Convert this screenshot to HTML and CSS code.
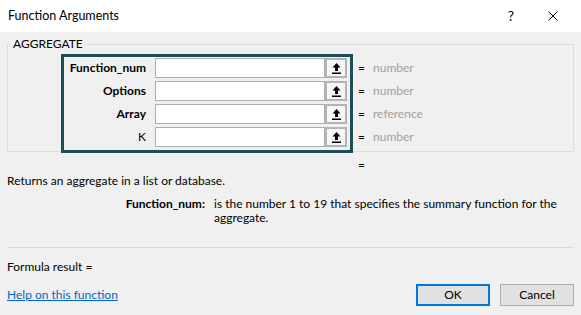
FILE: index.html
```html
<!DOCTYPE html>
<html>
<head>
<meta charset="utf-8">
<link rel="stylesheet" href="styles.css">
</head>
<body>
<div class="dialog">
  <div class="titlebar">
    <span class="title">Function Arguments</span>
    <span class="tb-btn help">?</span>
    <span class="tb-btn close">
      <svg width="10" height="10" viewBox="0 0 10 10"><path d="M0.5 0.5 L9.5 9.5 M9.5 0.5 L0.5 9.5" stroke="#000" stroke-width="1" fill="none"/></svg>
    </span>
  </div>
  <div class="content">
    <fieldset class="group">
      <legend class="group-title">AGGREGATE</legend>
      <div class="args">
        <div class="arg-box">
          <div class="arg-row">
            <span class="arg-label req">Function_num</span>
            <span class="arg-input"></span>
            <span class="ref-btn"><svg width="9" height="11" viewBox="0 0 9 11"><path d="M4.5 0 L0.5 4.5 H3 V8 H6 V4.5 H8.5 Z" fill="#000"/><rect x="0" y="9.5" width="9" height="1.5" fill="#000"/></svg></span>
          </div>
          <div class="arg-row">
            <span class="arg-label req">Options</span>
            <span class="arg-input"></span>
            <span class="ref-btn"><svg width="9" height="11" viewBox="0 0 9 11"><path d="M4.5 0 L0.5 4.5 H3 V8 H6 V4.5 H8.5 Z" fill="#000"/><rect x="0" y="9.5" width="9" height="1.5" fill="#000"/></svg></span>
          </div>
          <div class="arg-row">
            <span class="arg-label req">Array</span>
            <span class="arg-input"></span>
            <span class="ref-btn"><svg width="9" height="11" viewBox="0 0 9 11"><path d="M4.5 0 L0.5 4.5 H3 V8 H6 V4.5 H8.5 Z" fill="#000"/><rect x="0" y="9.5" width="9" height="1.5" fill="#000"/></svg></span>
          </div>
          <div class="arg-row">
            <span class="arg-label">K</span>
            <span class="arg-input"></span>
            <span class="ref-btn"><svg width="9" height="11" viewBox="0 0 9 11"><path d="M4.5 0 L0.5 4.5 H3 V8 H6 V4.5 H8.5 Z" fill="#000"/><rect x="0" y="9.5" width="9" height="1.5" fill="#000"/></svg></span>
          </div>
        </div>
        <div class="arg-values">
          <div class="val-row"><span class="eq">=</span><span class="val">number</span></div>
          <div class="val-row"><span class="eq">=</span><span class="val">number</span></div>
          <div class="val-row"><span class="eq">=</span><span class="val">reference</span></div>
          <div class="val-row"><span class="eq">=</span><span class="val">number</span></div>
        </div>
      </div>
    </fieldset>
    <div class="result-eq">=</div>
    <div class="summary">Returns an aggregate in a list or database.</div>
    <div class="arg-help">
      <span class="arg-help-name">Function_num:</span>
      <span class="arg-help-text">is the number 1 to 19 that specifies the summary function for the<br>aggregate.</span>
    </div>
    <div class="separator"></div>
    <div class="formula">Formula result =</div>
    <div class="footer">
      <a class="help-link" href="#">Help on this function</a>
      <span class="btn btn-default">OK</span>
      <span class="btn">Cancel</span>
    </div>
  </div>
</div>
</body>
</html>
```

FILE: styles.css
```css
* { box-sizing: border-box; }
html, body { margin: 0; padding: 0; }
body {
  width: 581px;
  height: 315px;
  overflow: hidden;
  background: #f0f0f0;
  font-family: "Lato", "Noto Sans", sans-serif;
  font-size: 12px;
  line-height: 16px;
  color: #000;
}
.dialog { width: 581px; height: 315px; }

.titlebar {
  height: 32px;
  background: #fff;
  display: flex;
  align-items: center;
  padding: 0 7px 0 8px;
}
.title { flex: 1; font-size: 12.5px; }
.tb-btn {
  width: 42px;
  height: 32px;
  display: flex;
  align-items: center;
  justify-content: center;
}
.help { font-size: 14px; }

.content { padding: 0 7px; }

.group {
  margin: 4px 0 0 0;
  padding: 0 0 0 3px;
  border: 1px solid #dcdcdc;
  min-width: 0;
}
.group-title {
  padding: 0 2px;
  line-height: 16px;
}

.args {
  display: flex;
  align-items: flex-start;
  margin: 2px 0 -2px 50px;
}
.arg-box {
  border: 3px solid #1d4e55;
  padding: 1px 3px 3px 0;
  display: flex;
  flex-direction: column;
  gap: 3px;
}
.arg-row {
  display: flex;
  height: 20px;
  align-items: center;
}
.arg-label {
  width: 82px;
  margin-right: 9px;
  text-align: right;
}
.arg-label.req { font-weight: bold; }
.arg-input {
  width: 170px;
  height: 20px;
  background: #fff;
  border: 1px solid #adadad;
}
.ref-btn {
  width: 22px;
  height: 20px;
  border: 2px solid #b4b4b4;
  background: #f6f6f6;
  display: flex;
  align-items: center;
  justify-content: center;
}
.ref-btn svg { display: block; }

.arg-values {
  margin: 4px 0 0 5px;
  display: flex;
  flex-direction: column;
  gap: 3px;
}
.val-row {
  height: 20px;
  display: flex;
  align-items: center;
}
.eq { width: 15px; }
.val { color: #a0a0a0; }

.result-eq {
  margin-top: 5px;
  padding-left: 351px;
}
.summary { margin-top: 0; }

.arg-help {
  margin-top: 8px;
  display: flex;
  align-items: flex-start;
  line-height: 14px;
}
.arg-help-name {
  width: 207px;
  flex: none;
  text-align: right;
  font-weight: bold;
  padding-right: 9px;
}
.arg-help-text { flex: 1; }

.separator {
  margin-top: 22px;
  height: 1px;
  background: #dadada;
}
.formula { margin-top: 11px; }

.footer {
  margin-top: 9px;
  display: flex;
  align-items: center;
}
.help-link {
  flex: 1;
  color: #0066cc;
  text-decoration: underline;
}
.btn {
  width: 74px;
  height: 22px;
  background: #e1e1e1;
  border: 1px solid #adadad;
  display: flex;
  align-items: center;
  justify-content: center;
}
.btn-default {
  border: 2px solid #0078d7;
  margin-right: 10px;
}
```
